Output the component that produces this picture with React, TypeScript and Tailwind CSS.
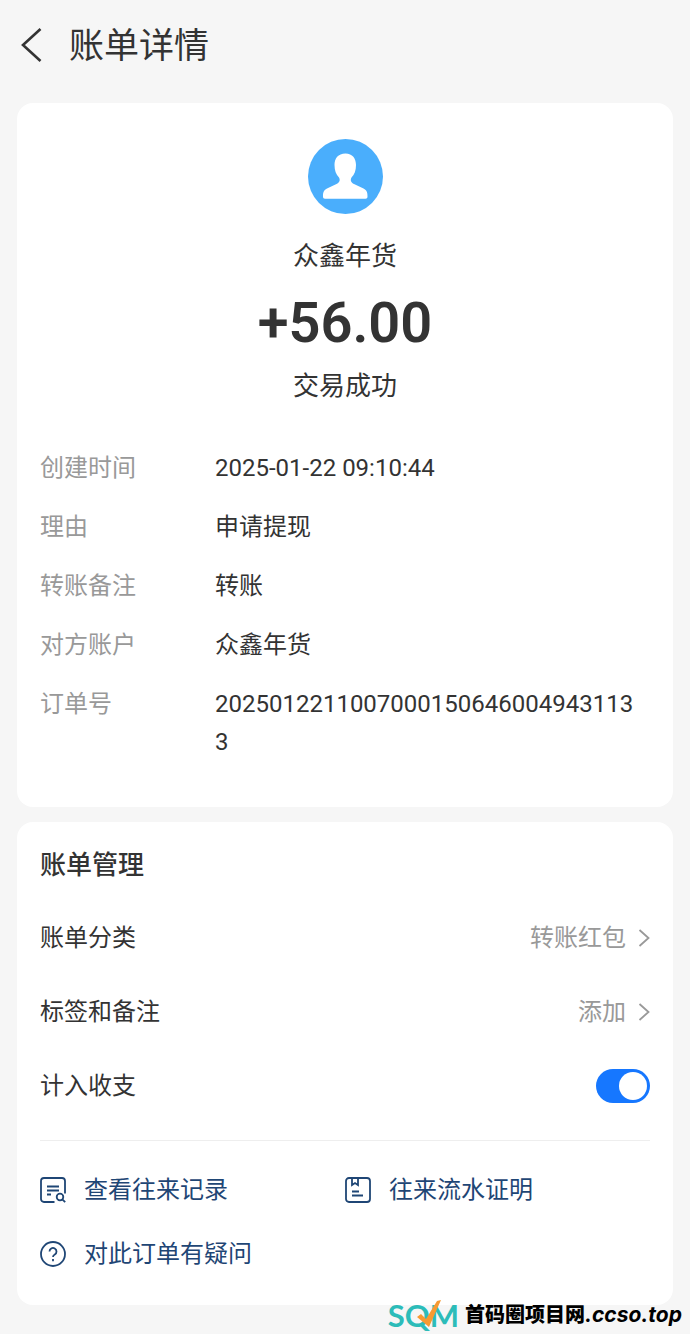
import React, { useState } from 'react';

const details = [
  { label: '创建时间', value: '2025-01-22 09:10:44' },
  { label: '理由', value: '申请提现' },
  { label: '转账备注', value: '转账' },
  { label: '对方账户', value: '众鑫年货' },
  { label: '订单号', value: '20250122110070001506460049431133' },
];

const BillDetail: React.FC = () => {
  const [counted, setCounted] = useState(true);

  return (
    <div className="relative min-h-screen bg-[#f6f6f6] px-[17px] pb-7 font-['Roboto','Noto_Sans_CJK_SC',sans-serif] text-2xl text-[#333]">
      <header className="flex h-[103px] items-start pt-5">
        <button type="button" aria-label="返回" className="flex h-[50px] w-[52px] items-center pl-1">
          <svg width="22" height="36" viewBox="0 0 22 36" fill="none" stroke="#333" strokeWidth="2.6">
            <path d="M19.5 2 2 18l17.5 16" />
          </svg>
        </button>
        <h1 className="text-[35px] leading-[54px]">账单详情</h1>
      </header>

      <main className="flex flex-col gap-[15px]">
        <section className="rounded-2xl bg-white px-[23px] pt-9 pb-[46px]">
          <div className="flex flex-col items-center">
            <Avatar />
            <p className="mt-6 text-[26px] leading-9">众鑫年货</p>
            <p className="mt-4 text-[56px] leading-[66px] font-semibold">+56.00</p>
            <p className="mt-3 text-[26px] leading-9">交易成功</p>
          </div>
          <dl className="mt-[45px] flex flex-col gap-[21px] leading-[38px]">
            {details.map((item) => (
              <div key={item.label} className="flex">
                <dt className="w-[175px] shrink-0 text-[#999]">{item.label}</dt>
                <dd className="min-w-0 flex-1 pr-3 break-all">{item.value}</dd>
              </div>
            ))}
          </dl>
        </section>

        <section className="rounded-2xl bg-white px-[23px] pt-[25px] pb-8">
          <h2 className="text-[26px] leading-9 font-medium">账单管理</h2>
          <div className="mt-[18px] flex flex-col">
            <LinkRow label="账单分类" value="转账红包" />
            <LinkRow label="标签和备注" value="添加" />
            <label className="flex h-[74px] items-center justify-between">
              计入收支
              <input
                type="checkbox"
                role="switch"
                checked={counted}
                onChange={(e) => setCounted(e.target.checked)}
                className="peer sr-only"
              />
              <span className="flex h-[34px] w-[54px] items-center rounded-full bg-[#ccc] p-[3px] peer-checked:justify-end peer-checked:bg-[#1677ff]">
                <span className="size-7 rounded-full bg-white" />
              </span>
            </label>
          </div>
          <div className="mt-[17px] grid grid-cols-2 gap-y-[26px] border-t border-[#eee] pt-[30px] text-[#1f4675]">
            <ActionLink icon={<RecordIcon />} text="查看往来记录" />
            <ActionLink icon={<ProofIcon />} text="往来流水证明" />
            <ActionLink icon={<QuestionIcon />} text="对此订单有疑问" />
          </div>
        </section>
      </main>

      <Watermark />
    </div>
  );
};

const LinkRow: React.FC<{ label: string; value: string }> = ({ label, value }) => (
  <button type="button" className="flex h-[74px] items-center justify-between">
    <span>{label}</span>
    <span className="flex items-center gap-3 text-[#999]">
      {value}
      <svg width="12" height="20" viewBox="0 0 12 20" fill="none" stroke="currentColor" strokeWidth="1.8">
        <path d="m1.500 2 9 8-9 8" />
      </svg>
    </span>
  </button>
);

const ActionLink: React.FC<{ icon: React.ReactNode; text: string }> = ({ icon, text }) => (
  <a href="#" className="flex items-center gap-[18px] leading-[38px]">
    {icon}
    {text}
  </a>
);

const Avatar: React.FC = () => (
  <svg width="75" height="75" viewBox="0 0 75 75">
    <circle cx="37.5" cy="37.5" r="37.5" fill="#4aaefc" />
    <path
      fill="#fff"
      d="M37.500 14.500C30 14.500 26.500 19.500 26.500 26c0 5.500 1.500 9.500 4.500 12.500 1.500 3 .5 5-2.500 6.500L19 49.500c-3.500 2-4 4-4 8 0 1.500.7 2.200 2 2.200h40.500c1.300 0 2-.7 2-2.200 0-4-.5-6-4-8L46 45c-3-1.500-4-3.500-2.500-6.500 3-3 4.500-7 4.500-12.500 0-6.500-3.500-11.500-10.500-11.500z"
    />
  </svg>
);

const RecordIcon: React.FC = () => (
  <svg width="26" height="26" viewBox="0 0 26 26" fill="none" stroke="currentColor" strokeWidth="1.8">
    <path d="M14.500 25H4a3 3 0 0 1-3-3V4a3 3 0 0 1 3-3h18a3 3 0 0 1 3 3v12.500" />
    <path d="M7 9.500h12M7 13.500h12M7 17.500h4" />
    <circle cx="20" cy="20" r="3.300" />
    <path d="m22.300 22.300 2.900 2.900" />
  </svg>
);

const ProofIcon: React.FC = () => (
  <svg width="26" height="26" viewBox="0 0 26 26" fill="none" stroke="currentColor" strokeWidth="1.8">
    <rect x="1" y="1" width="24" height="24" rx="3" />
    <path d="M7 1v7l3-2 3 2V1M7 14.500h7M7 18.500h11" />
  </svg>
);

const QuestionIcon: React.FC = () => (
  <svg width="26" height="26" viewBox="0 0 26 26" fill="none" stroke="currentColor" strokeWidth="1.8">
    <circle cx="13" cy="13" r="12" />
    <path d="M9.500 10.500a3.500 3.500 0 1 1 5.300 3c-1.300.8-1.800 1.300-1.800 2.500M13 18v2.200" />
  </svg>
);

const Watermark: React.FC = () => (
  <div className="absolute right-2 bottom-0 flex h-[38px] items-center gap-[6px] whitespace-nowrap text-black">
    <span className="relative font-['Lato',sans-serif] text-[31px] leading-[38px] font-bold text-[#2cbcb9]">
      SQM
      <svg className="absolute top-1 left-[29px]" width="24" height="27" viewBox="0 0 24 27">
        <path d="M0 17l4-3 5 5L20 1l4-1-12 27z" fill="#f79a32" />
      </svg>
    </span>
    <span className="flex items-center text-xl font-black">
      首码圈项目网
      <span className="font-['Inter',sans-serif] text-[21px] font-bold italic">.ccso.top</span>
    </span>
  </div>
);

export default BillDetail;
